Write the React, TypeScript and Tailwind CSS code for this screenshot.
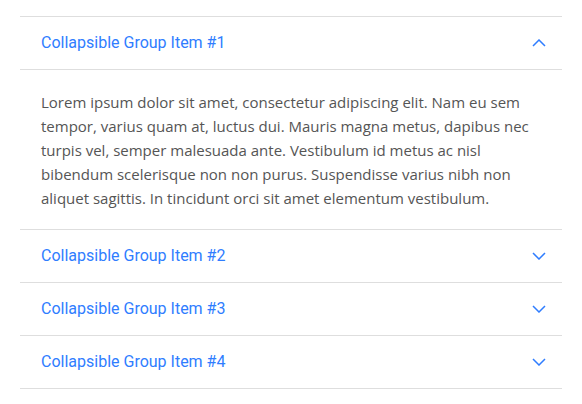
import { useState } from 'react'

// ── Data ───────────────────────────────────────────────────────────────────────

const ITEMS = [
  'Collapsible Group Item #1',
  'Collapsible Group Item #2',
  'Collapsible Group Item #3',
  'Collapsible Group Item #4',
]

const BODY =
  'Lorem ipsum dolor sit amet, consectetur adipiscing elit. Nam eu sem tempor, varius quam at, luctus dui. Mauris magna metus, dapibus nec turpis vel, semper malesuada ante. Vestibulum id metus ac nisl bibendum scelerisque non non purus. Suspendisse varius nibh non aliquet sagittis. In tincidunt orci sit amet elementum vestibulum.'

function Chevron({ open }: { open: boolean }) {
  return (
    <svg
      width="14"
      height="8"
      viewBox="0 0 14 8"
      fill="none"
      stroke="currentColor"
      strokeWidth="1.5"
      className={open ? 'rotate-180' : ''}
    >
      <polyline points="1,1 7,7 13,1" />
    </svg>
  )
}

// ── Component ──────────────────────────────────────────────────────────────────

export default function App() {
  const [open, setOpen] = useState<number | null>(0)

  return (
    <div className="bg-white min-h-screen px-5 pt-4">
      <div className="border-t border-[#dedede]">
        {ITEMS.map((title, i) => {
          const isOpen = open === i
          return (
            <div key={title} className="border-b border-[#dedede]">
              <button
                onClick={() => setOpen(isOpen ? null : i)}
                className="w-full h-[52px] flex items-center justify-between pl-[21px] pr-[16px] text-[#2f7dff] text-[16px] font-['Roboto',sans-serif] text-left"
              >
                <span>{title}</span>
                <Chevron open={isOpen} />
              </button>
              {isOpen && (
                <div className="border-t border-[#dedede] pl-[21px] pr-[20px] pt-5 pb-[19px] text-[15px] leading-6 text-[#555] font-['Open_Sans',sans-serif]">
                  {BODY}
                </div>
              )}
            </div>
          )
        })}
      </div>
    </div>
  )
}
